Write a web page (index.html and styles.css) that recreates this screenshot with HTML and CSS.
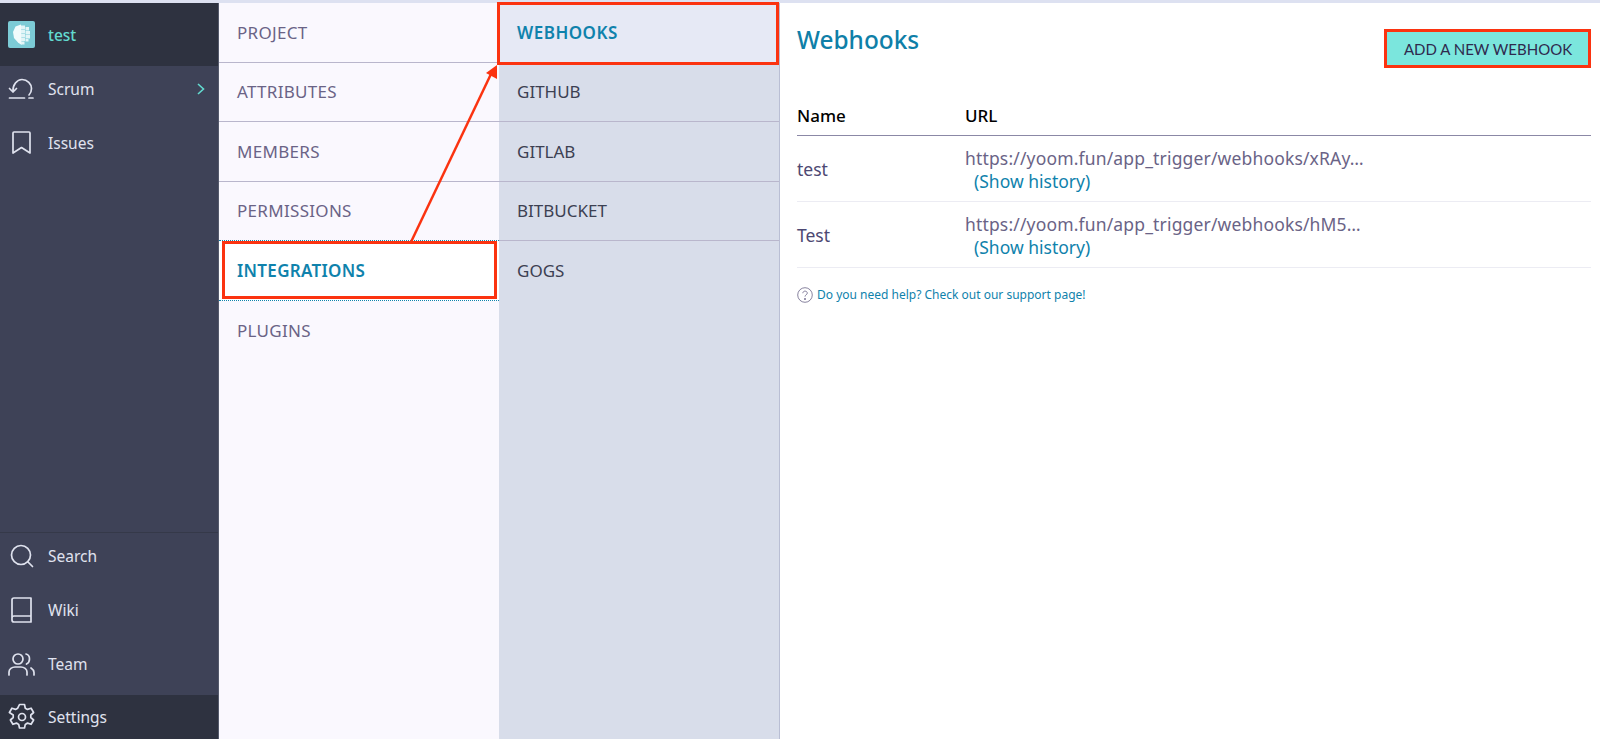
FILE: index.html
```html
<!DOCTYPE html>
<html lang="en">
<head>
<meta charset="utf-8">
<title>Webhooks</title>
<link rel="stylesheet" href="styles.css">
</head>
<body>
<div class="topband"></div>
<div class="app">
  <aside class="sidebar">
    <div class="project">
      <svg class="logo" viewBox="0 0 27 27"><rect width="27" height="27" rx="2" fill="#7ccbd6"/><path d="M13 3.500L7.500 5.500 5 11l1 6 4 4.500 3.500 2.500z" fill="#f2fbfc"/><path class="logo-pixels" d="M13 4.500h4v3.500h-4zM17.500 6H21v3.500h-3.500zM13 8.500h4V12h-4zM17.500 10H22v3.500h-4.500zM13 12.500h4V16h-4zM17.500 14H22v3.500h-4.500zM13 16.500h4V20h-4zM17.500 18h3v2.500h-3zM13 20.500h3.500v3H13z"/></svg>
      <span class="project-name">test</span>
    </div>
    <nav class="nav">
      <a class="nav-item"><svg class="icon" viewBox="0 0 28 28"><path d="M5 16.500C4.500 10 9 4.500 14 4.500c5.500 0 9.500 4.500 9.500 9 0 3-1 5-2.500 6.500"/><path d="M1.500 13.500l3.500 3.500 3.500-3.500M1.500 23h15M21 23h4"/></svg><span>Scrum</span><svg class="chev" viewBox="0 0 10 14"><path d="M2 2l5.500 5L2 12"/></svg></a>
      <a class="nav-item"><svg class="icon" viewBox="0 0 28 28"><path d="M6 3h15a1 1 0 0 1 1 1v20l-8.500-5.500L5 24V4a1 1 0 0 1 1-1z"/></svg><span>Issues</span></a>
    </nav>
    <nav class="nav nav-bottom">
      <a class="nav-item"><svg class="icon" viewBox="0 0 28 28"><circle cx="13" cy="13" r="9.500"/><path d="M20 20l4.500 4.500"/></svg><span>Search</span></a>
      <a class="nav-item"><svg class="icon" viewBox="0 0 28 28"><path d="M4 22V4a2 2 0 0 1 2-2h17v24H6a2 2 0 0 1-2-2v-2a2 2 0 0 1 2-2h17"/></svg><span>Wiki</span></a>
      <a class="nav-item"><svg class="icon" viewBox="0 0 28 28"><circle cx="10" cy="9" r="5"/><path d="M1 25v-3c0-3 3-5 6-5h6c3 0 6 2 6 5v3M18 4c2.500.5 3.500 3 3.500 5s-1 4-3 5M23 18c1.500 1 3 2.500 3 4.500V25"/></svg><span>Team</span></a>
      <a class="nav-item is-current"><svg class="icon" viewBox="0 0 28 28"><circle cx="14" cy="14" r="3.500"/><path d="M11.500 1.500h5l.8 3.700 2.200 1.200 3.600-1.200 2.500 4.300-2.800 2.500v2.500l2.800 2.500-2.500 4.300-3.600-1.200-2.200 1.300-.8 3.600h-5l-.8-3.600-2.200-1.300-3.600 1.200-2.500-4.300 2.800-2.500v-2.500L1.400 9.500l2.500-4.300 3.600 1.200 2.200-1.200z"/></svg><span>Settings</span></a>
    </nav>
  </aside>

  <ul class="menu menu-primary">
    <li class="menu-item">PROJECT</li>
    <li class="menu-item">ATTRIBUTES</li>
    <li class="menu-item">MEMBERS</li>
    <li class="menu-item">PERMISSIONS</li>
    <li class="menu-item is-active">INTEGRATIONS</li>
    <li class="menu-item">PLUGINS</li>
  </ul>

  <ul class="menu menu-secondary">
    <li class="menu-item is-active">WEBHOOKS</li>
    <li class="menu-item">GITHUB</li>
    <li class="menu-item">GITLAB</li>
    <li class="menu-item">BITBUCKET</li>
    <li class="menu-item">GOGS</li>
  </ul>

  <main class="content">
    <header class="content-head">
      <h1 class="title">Webhooks</h1>
      <button class="btn">ADD A NEW WEBHOOK</button>
    </header>
    <div class="table">
      <div class="row row-head"><div class="col-name">Name</div><div class="col-url">URL</div></div>
      <div class="row">
        <div class="col-name">test</div>
        <div class="col-url"><div class="url">https://yoom.fun/app_trigger/webhooks/xRAy…</div><a class="history">(Show history)</a></div>
      </div>
      <div class="row">
        <div class="col-name">Test</div>
        <div class="col-url"><div class="url">https://yoom.fun/app_trigger/webhooks/hM5…</div><a class="history">(Show history)</a></div>
      </div>
    </div>
    <p class="help"><svg class="help-icon" viewBox="0 0 16 16"><circle cx="8" cy="8" r="7.300"/><path d="M5.800 6.200C5.900 4.900 6.900 4.100 8 4.100c1.300 0 2.300.9 2.300 2 0 1.600-2.300 1.800-2.300 3.500"/><circle class="dot" cx="8" cy="12" r=".6"/></svg><a>Do you need help? Check out our support page!</a></p>
  </main>
</div>

<div class="mark mark-integrations"></div>
<div class="mark mark-webhooks"></div>
<div class="mark mark-button"></div>
<svg class="arrow" viewBox="0 0 1600 739"><path class="arrow-line" d="M411 242L491 74"/><path class="arrow-head" d="M497 65L486 73L497 79Z"/></svg>
</body>
</html>
```
FILE: styles.css
```css
* { box-sizing: border-box; }
html, body { margin: 0; height: 739px; overflow: hidden; }
body { font-family: "Noto Sans", "DejaVu Sans", sans-serif; background: #fff; position: relative; }

.topband { height: 3px; background: #dde1f1; }
.app { display: flex; height: 736px; }

.sidebar { width: 219px; flex: none; display: flex; flex-direction: column; background: #3e4257; color: #e0e3ef; font-size: 15.500px; border-right: 1px solid #555a6c; }
.project { height: 63px; background: #2e3240; display: flex; align-items: center; padding-left: 8px; gap: 13px; }
.logo { width: 27px; height: 27px; flex: none; }
.logo-pixels { fill: #e2f5f7; }
.project-name { color: #63dbd0; font-size: 15.500px; font-weight: 500; }

.nav { display: flex; flex-direction: column; gap: 8px; }
.nav-item { display: flex; align-items: center; height: 46px; padding-left: 8px; position: relative; }
.nav-item span { margin-left: 12px; }
.icon { width: 28px; height: 28px; flex: none; fill: none; stroke: #dfe2ee; stroke-width: 1.700; stroke-linecap: round; stroke-linejoin: round; }
.chev { position: absolute; left: 196px; top: 16px; width: 10px; height: 14px; fill: none; stroke: #63dbd0; stroke-width: 1.600; }
.nav-bottom { margin-top: auto; border-top: 1px solid #353949; }
.nav-item.is-current { height: 44px; background: #2e3240; }

.menu { list-style: none; margin: 0; padding: 0; width: 281px; flex: none; font-size: 17px; }
.menu-primary { width: 280px; background: #faf8fe; color: #6a6386; letter-spacing: .3px; }
.menu-secondary { background: #d8ddea; color: #3c4052; border-right: 1px solid #b9bed4; }
.menu-item { height: 59.500px; display: flex; align-items: center; padding-left: 18px; border-bottom: 1px solid #b9b6cc; }
.menu-item:last-child { border-bottom: 0; }
.menu-primary .is-active { background: #fff; color: #0f82ac; font-weight: 600; border-top: 1px dotted #0f82ac; border-bottom: 1px dotted #0f82ac; }
.menu-secondary .is-active { background: #e6e9f5; color: #0f82ac; font-weight: 600; letter-spacing: .5px; }
.menu-primary .menu-item.is-active { margin-top: -1px; height: 60.500px; }

.content { flex: 1; padding: 0 9px 0 17px; color: #4d4872; }
.content-head { display: flex; justify-content: space-between; align-items: flex-start; height: 87px; }
.title { margin: 20px 0 0; font-size: 24.400px; line-height: 33px; font-weight: 500; color: #0f7fa8; }
.btn { margin: 29px 2px 0 0; width: 202px; height: 33px; border: 0; background: #7be6dd; color: #2f2a4e; font-family: Lato, sans-serif; font-size: 15px; padding: 0; }

.table { font-size: 17.500px; }
.row { display: flex; align-items: center; height: 66px; border-bottom: 1px solid #ececf3; }
.row-head { height: 46px; font-size: 17px; font-weight: 500; color: #000; border-bottom: 1px solid #8b88a6; align-items: flex-end; padding-bottom: 8px; }
.col-name { width: 168px; flex: none; }
.col-url { flex: 1; line-height: 23px; }
.row:not(.row-head) .col-url { padding-top: 3px; }
.url { color: #6a6386; letter-spacing: .16px; }
.history { color: #0f82ac; margin-left: 9px; display: block; }

.help { margin: 18px 0 0; display: flex; align-items: center; font-size: 12px; color: #0f82ac; gap: 4px; }
.help-icon { width: 16px; height: 16px; fill: none; stroke: #6a6386; stroke-width: .8; }
.dot { fill: #6a6386; }

.mark { position: absolute; border: 3px solid #fb3310; pointer-events: none; }
.mark-integrations { left: 222px; top: 241px; width: 275px; height: 58px; }
.mark-webhooks { left: 497px; top: 2px; width: 282px; height: 63px; }
.mark-button { left: 1384px; top: 29px; width: 207px; height: 39px; }
.arrow { position: absolute; left: 0; top: 0; width: 1600px; height: 739px; pointer-events: none; }
.arrow-line { stroke: #fb3310; stroke-width: 2.500; fill: none; }
.arrow-head { fill: #fb3310; }
```
